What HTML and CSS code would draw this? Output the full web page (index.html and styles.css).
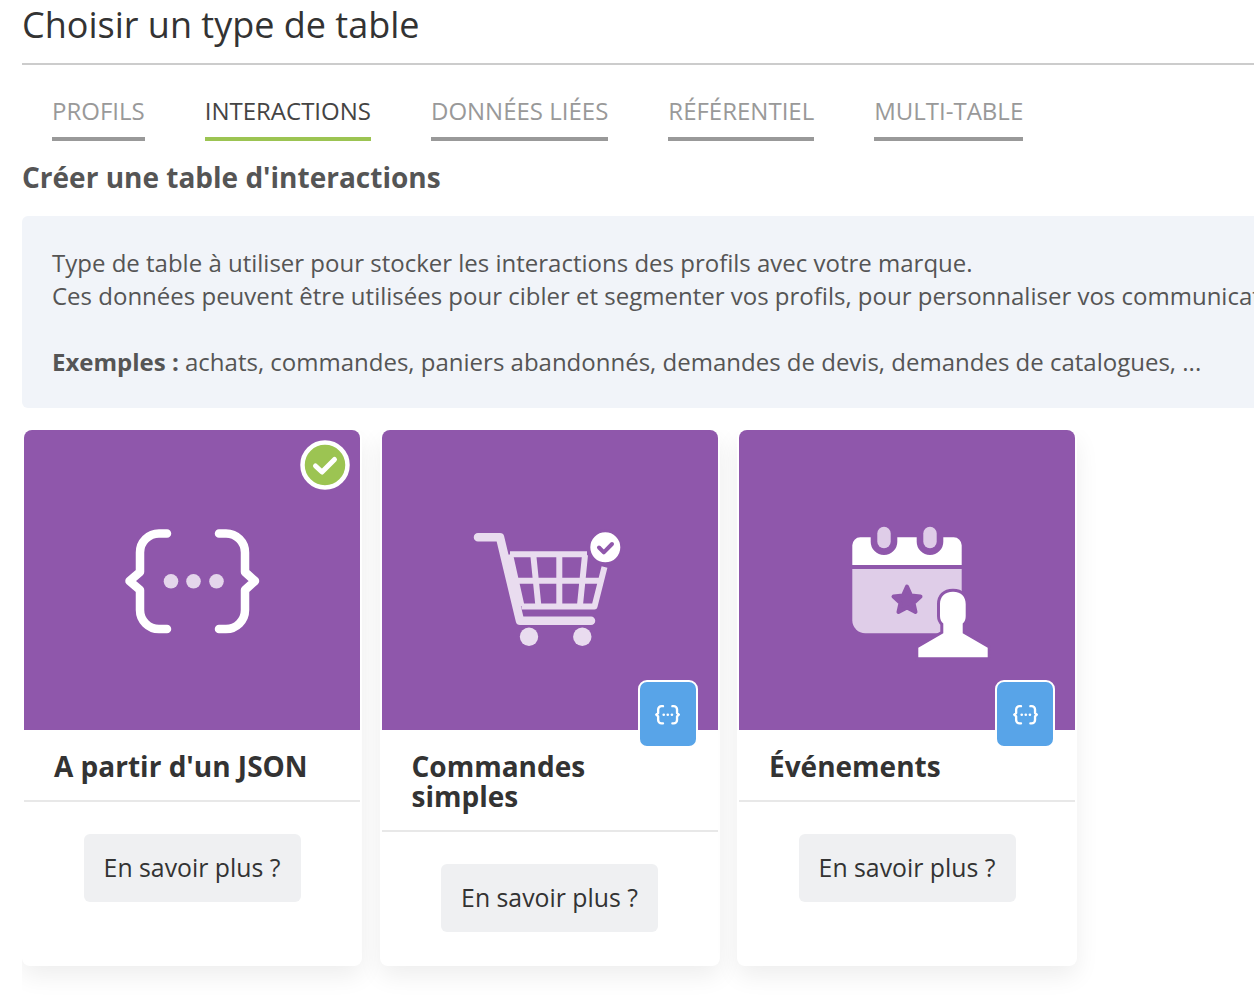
FILE: index.html
```html
<!DOCTYPE html>
<html lang="fr">
<head>
<meta charset="utf-8">
<title>Choisir un type de table</title>
<link rel="stylesheet" href="styles.css">
</head>
<body>
<svg class="defs" width="0" height="0" aria-hidden="true">
  <symbol id="braces" viewBox="0 0 150 150">
    <path class="brace" d="M50 28.500H42A19 19 0 0 0 23 47.500V67L12.500 76L23 85V105A19 19 0 0 0 42 124H50"/>
    <path class="brace" d="M102 28.500H109A19 19 0 0 1 128 47.500V67L138 76L128 85V105A19 19 0 0 1 109 124H102"/>
    <circle class="dot" cx="54" cy="76.300" r="7.300"/>
    <circle class="dot" cx="76.500" cy="76.300" r="7.300"/>
    <circle class="dot" cx="99.500" cy="76.300" r="7.300"/>
  </symbol>
</svg>
<main class="page">
  <h1 class="title">Choisir un type de table</h1>
  <nav class="tabs">
    <a class="tab">PROFILS</a>
    <a class="tab active">INTERACTIONS</a>
    <a class="tab">DONNÉES LIÉES</a>
    <a class="tab">RÉFÉRENTIEL</a>
    <a class="tab">MULTI-TABLE</a>
  </nav>
  <h2 class="subtitle">Créer une table d'interactions</h2>
  <section class="note">
    <p>Type de table à utiliser pour stocker les interactions des profils avec votre marque.<br>Ces données peuvent être utilisées pour cibler et segmenter vos profils, pour personnaliser vos communications</p>
    <p class="examples"><strong>Exemples :</strong> achats, commandes, paniers abandonnés, demandes de devis, demandes de catalogues, ...</p>
  </section>
  <section class="cards">
    <article class="card">
      <div class="cover">
        <svg class="icon"><use href="#braces"/></svg>
        <span class="selected">
          <svg viewBox="0 0 50 50"><circle class="sel-bg" cx="25" cy="25" r="22.500"/><path class="sel-check" d="M15.500 26L22 32L34.500 19.500"/></svg>
        </span>
      </div>
      <h3 class="card-title">A partir d'un JSON</h3>
      <div class="card-foot"><button class="more">En savoir plus ?</button></div>
    </article>
    <article class="card">
      <div class="cover">
        <svg class="icon" viewBox="0 0 150 150">
          <path class="cart-line" d="M3 32.300H25L45 115.700H116"/>
          <path class="cart-thin" d="M35 49.300H112M46.500 101.500H119.500L129.500 62M39.500 75.700H127M58.300 50L63.300 100M84.300 50V100M110 50L105 100M35 49.300L46.500 101"/>
          <circle class="cart-fill" cx="54" cy="131.700" r="9.200"/>
          <circle class="cart-fill" cx="107.300" cy="131.700" r="9.200"/>
          <circle class="cart-badge" cx="130.300" cy="42.300" r="16.500"/>
          <path class="cart-check" d="M124 42.500L128.800 47.300L137 39"/>
        </svg>
        <span class="kind"><svg class="kind-icon"><use href="#braces"/></svg></span>
      </div>
      <h3 class="card-title">Commandes simples</h3>
      <div class="card-foot"><button class="more">En savoir plus ?</button></div>
    </article>
    <article class="card">
      <div class="cover">
        <svg class="icon" viewBox="0 0 150 150">
          <path class="cal-top" d="M20.300 60V40.300A8 8 0 0 1 28.300 32.300H38.700V36.700A13.300 13.300 0 0 0 65.300 36.700V32.300H84.700V36.700A13.300 13.300 0 0 0 111.300 36.700V32.300H121.700A8 8 0 0 1 129.700 40.300V60Z"/>
          <rect class="cal-pin" x="45.300" y="21.700" width="13.400" height="21.600" rx="6.700"/>
          <rect class="cal-pin" x="91.300" y="21.700" width="13.400" height="21.600" rx="6.700"/>
          <path class="cal-body" d="M20.300 64H129.700V128.300H33.300A13 13 0 0 1 20.300 115.300Z"/>
          <path class="cal-star" d="M75 81.500L79 90.500L88.500 91.500L81.500 98L83.500 107L75 102.500L66.500 107L68.500 98L61.500 91.500L71 90.500Z"/>
          <path class="cal-person" d="M121 86.700C112.500 86.700 108 92 108 99V111C108 114 109 116.500 111.300 118.500V128.300L86.300 142.700V152.300H155.700V142.700L130.700 128.300V118.500C133 116.500 133.700 114 133.700 111V99C133.700 92 129.500 86.700 121 86.700Z"/>
        </svg>
        <span class="kind"><svg class="kind-icon"><use href="#braces"/></svg></span>
      </div>
      <h3 class="card-title">Événements</h3>
      <div class="card-foot"><button class="more">En savoir plus ?</button></div>
    </article>
  </section>
</main>
</body>
</html>
```
FILE: styles.css
```css
* { box-sizing: border-box; }
html, body { margin: 0; padding: 0; height: 100%; overflow: hidden; background: #fff; }
body { font-family: "Open Sans", "Liberation Sans", sans-serif; color: #333; }
.defs { position: absolute; }
.page { width: 1420px; padding-left: 22px; }
.title { margin: 0; height: 65px; border-bottom: 2px solid #ccc; font-size: 36px; font-weight: 400; line-height: 50px; color: #333; }
.tabs { display: flex; gap: 60px; padding: 30px 0 0 30px; }
.tab { display: block; height: 46px; border-bottom: 4px solid #999; font-size: 24px; line-height: 31px; color: #999; }
.tab.active { border-bottom-color: #9cc452; color: #444; }
.subtitle { margin: 17px 0 0; font-size: 28px; font-weight: 700; line-height: 38px; color: #555; }
.note { margin-top: 20px; height: 192px; padding: 30px 30px 0; border-radius: 6px; background: #f1f4f9; font-size: 24px; line-height: 33px; color: #555; white-space: nowrap; }
.note p { margin: 0; }
.note .examples { margin-top: 33px; }
.note strong { font-weight: 700; }
.cards { display: flex; gap: 17.500px; width: 1232px; margin-top: 22px; padding-bottom: 40px; overflow: hidden; }
.card { display: flex; flex-direction: column; width: 340px; height: 536px; padding: 0 2px; border-radius: 8px; background: #fff; box-shadow: 0 10px 24px rgba(0, 0, 0, .07); }
.cover { position: relative; display: flex; align-items: center; justify-content: center; flex: none; height: 300px; border-radius: 8px 8px 0 0; background: #8f57ab; }
.icon { width: 150px; height: 150px; overflow: visible; }
.brace { fill: none; stroke: #fff; stroke-width: var(--brace-width, 8.500); stroke-linecap: round; stroke-linejoin: round; }
.dot { fill: var(--dot-fill, #e4d6eb); }
.selected { position: absolute; top: 10px; right: 10px; width: 50px; height: 50px; }
.selected svg { display: block; width: 50px; height: 50px; }
.sel-bg { fill: #9cc452; stroke: #fff; stroke-width: 4.500; }
.sel-check { fill: none; stroke: #fff; stroke-width: 5; stroke-linecap: round; stroke-linejoin: round; }
.cart-line { fill: none; stroke: #e9dcef; stroke-width: 8.500; stroke-linecap: round; stroke-linejoin: round; }
.cart-thin { fill: none; stroke: #e9dcef; stroke-width: 6; stroke-linejoin: round; }
.cart-fill { fill: #e9dcef; }
.cart-badge { fill: #fff; stroke: #8f57ab; stroke-width: 3; }
.cart-check { fill: none; stroke: #8f57ab; stroke-width: 4; stroke-linecap: round; stroke-linejoin: round; }
.cal-top { fill: #fff; }
.cal-pin { fill: #dfcde8; }
.cal-body { fill: #dfcde8; }
.cal-star { fill: #8f57ab; stroke: #8f57ab; stroke-width: 4; stroke-linejoin: round; }
.cal-person { fill: #fff; stroke: #8f57ab; stroke-width: 6; paint-order: stroke; }
.kind { position: absolute; right: 20px; bottom: -18px; display: flex; align-items: center; justify-content: center; width: 60px; height: 68px; border: 2px solid #fff; border-radius: 9px; background: #58a4e8; --brace-width: 13; --dot-fill: #fff; }
.kind-icon { width: 27px; height: 27px; }
.card-title { margin: 0; padding: 21px 30px 19px; border-bottom: 2px solid #e8e8e8; font-size: 28px; font-weight: 700; line-height: 30px; color: #333; }
.card-foot { display: flex; justify-content: center; padding-top: 32px; }
.more { width: 217px; height: 68px; padding: 0 0 2px; border: 0; border-radius: 6px; background: #eff0f2; font-family: inherit; font-size: 24.800px; font-weight: 500; color: #333; }
```
